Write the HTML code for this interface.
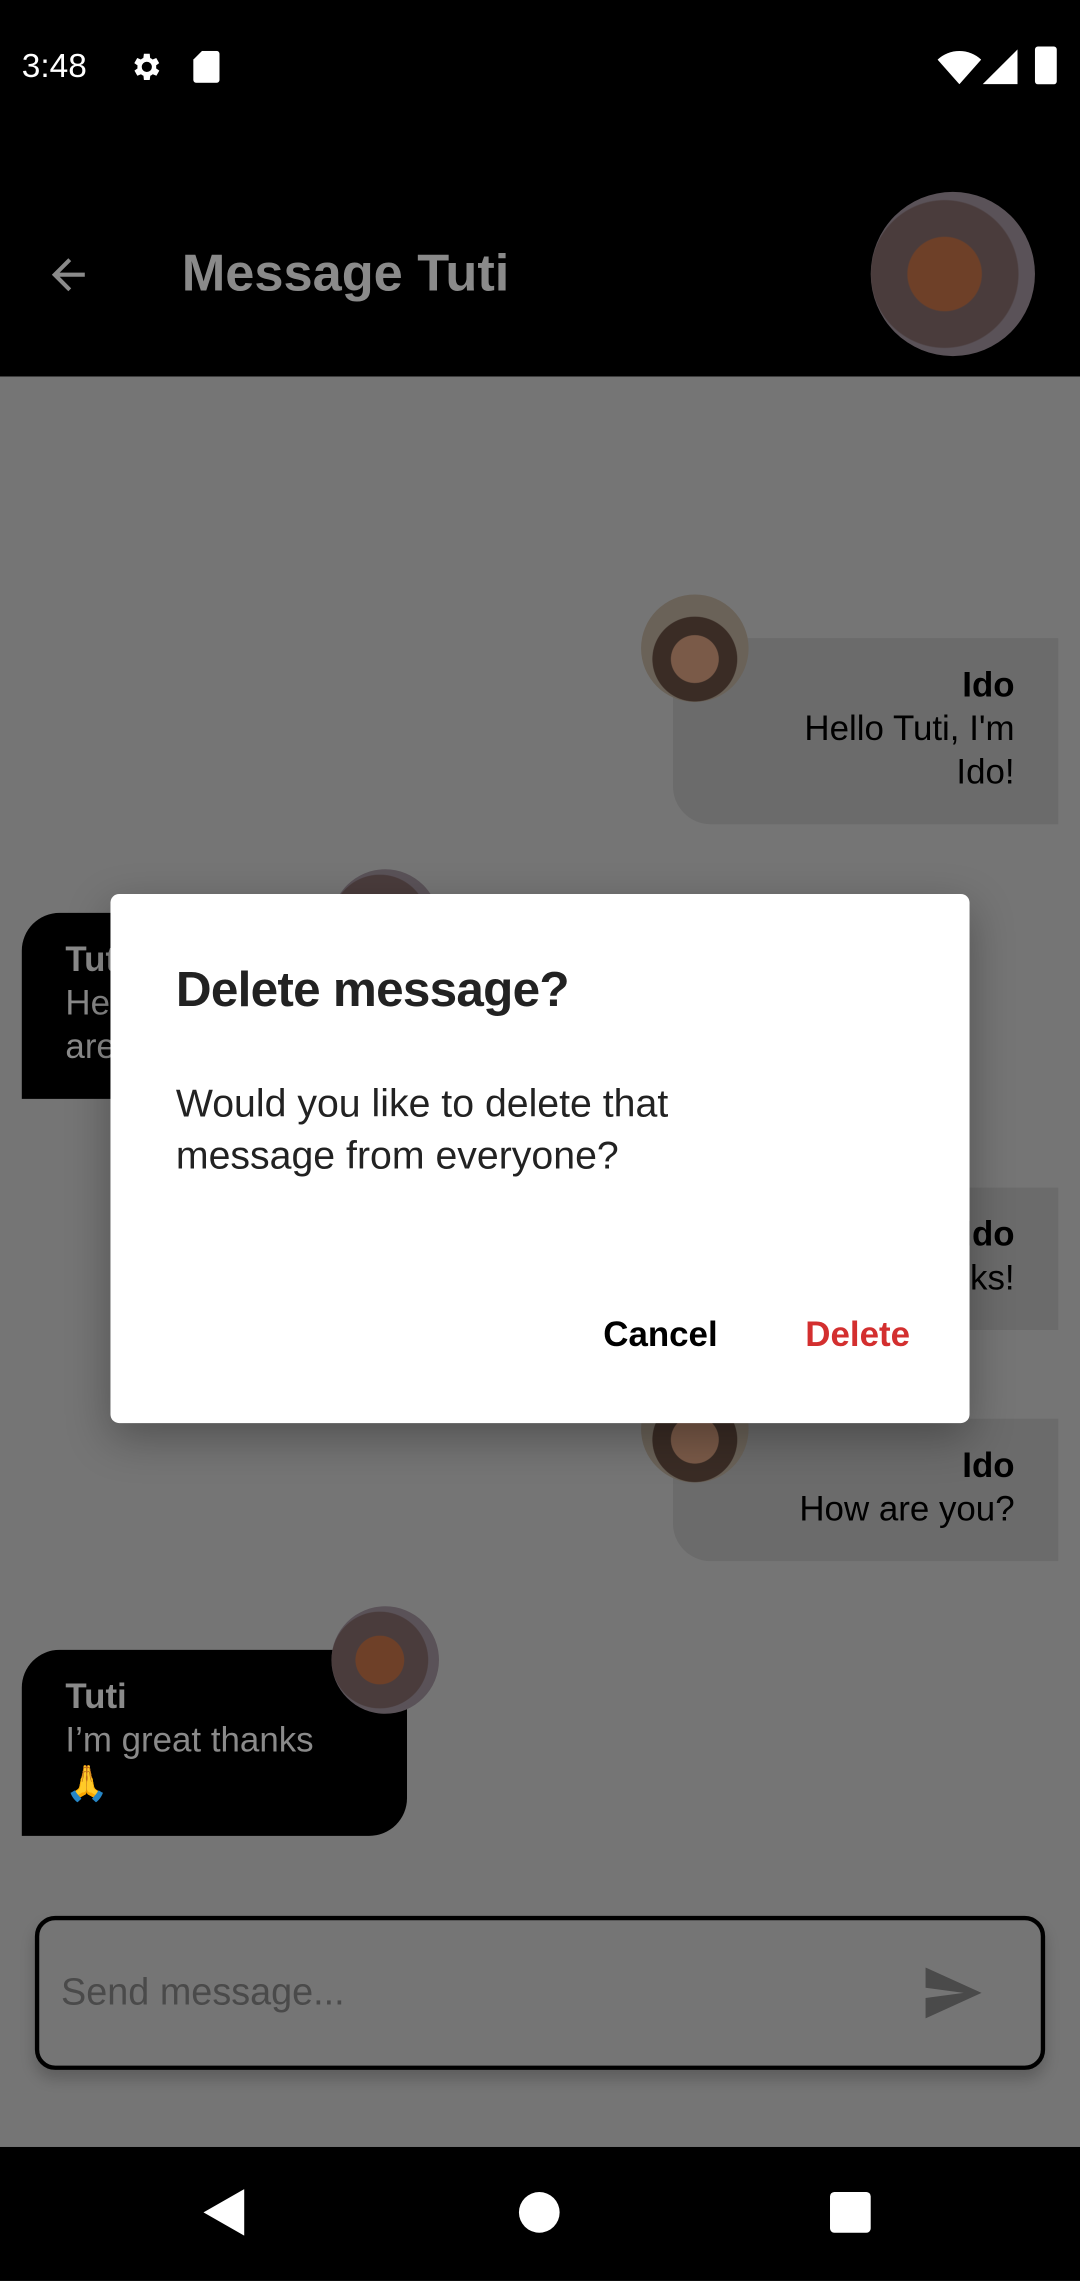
<!DOCTYPE html>
<html><head><style>
*{margin:0;padding:0;box-sizing:border-box}
body{width:1080px;height:2280px;overflow:hidden;background:#000;font-family:"Liberation Sans",sans-serif}
#w{width:743px;height:1569px;transform:scale(1.4536);transform-origin:0 0;position:relative;background:#757575}
.a{position:absolute}
.bub{position:absolute;width:265px;padding:18px 30px;font-size:24px;line-height:30px}
.ido{left:463px;background:#6b6b6b;color:#000;text-align:right;border-radius:26px 0 0 26px}
.tuti{left:15px;background:#000;color:#8a8a8a;border-radius:26px 26px 26px 0}
.av{position:absolute;width:74px;height:74px;border-radius:50%;}
.idoav{background:radial-gradient(circle at 50% 60%,#7a5a48 0 28%,#3a2c25 29% 50%,#6a6258 51%)}
.dogav{background:radial-gradient(circle at 45% 50%,#6e4028 0 30%,#4a3c3c 31% 60%,#5a5258 61%)}
</style></head><body><div id="w">
<div class="a" style="left:0;top:0;width:743px;height:259px;background:#000"></div>
<div class="a" style="left:15px;top:32px;color:#fff;font-size:23px">3:48</div>
<svg class="a" style="left:88px;top:34px" width="24" height="24" viewBox="0 0 24 24"><path fill="#fff" d="M19.4 13a7.5 7.5 0 000-2l2.1-1.6-2-3.5-2.5 1a7 7 0 00-1.7-1L15 3h-4l-.4 2.9a7 7 0 00-1.7 1l-2.5-1-2 3.5L6.6 11a7.5 7.5 0 000 2l-2.1 1.6 2 3.5 2.5-1a7 7 0 001.7 1L11 21h4l.4-2.9a7 7 0 001.7-1l2.5 1 2-3.5zM13 15.5a3.5 3.5 0 110-7 3.5 3.5 0 010 7z"/></svg>
<svg class="a" style="left:132px;top:35px" width="20" height="22" viewBox="0 0 20 22"><path fill="#fff" d="M7 0h10a2 2 0 012 2v18a2 2 0 01-2 2H3a2 2 0 01-2-2V6z"/></svg>
<svg class="a" style="left:645px;top:34px" width="30" height="24" viewBox="0 0 30 24"><path fill="#fff" d="M0 7a22 22 0 0130 0L15 24z"/></svg>
<svg class="a" style="left:676px;top:34px" width="24" height="24"><path fill="#fff" d="M24 0v24H0z"/></svg>
<div class="a" style="left:712px;top:32px;width:15px;height:26px;background:#fff;border-radius:2px"></div>
<svg class="a" style="left:30px;top:172px" width="34" height="34" viewBox="0 0 24 24"><path fill="#8a8a8a" d="M20 11H7.8l5.6-5.6L12 4l-8 8 8 8 1.4-1.4L7.8 13H20z"/></svg>
<div class="a" style="left:125px;top:167px;color:#8a8a8a;font-size:36px;font-weight:bold">Message Tuti</div>
<div class="av dogav" style="left:599px;top:132px;width:113px;height:113px"></div>

<div class="bub ido" style="top:439px;height:128px"><b>Ido</b><br>Hello Tuti, I'm<br>Ido!</div>
<div class="av idoav" style="left:441px;top:409px"></div>
<div class="bub tuti" style="top:628px;height:128px"><b>Tuti</b><br>Hello Ido, how<br>are you?</div>
<div class="av dogav" style="left:228px;top:598px"></div>
<div class="bub ido" style="top:817px;height:98px"><b>Ido</b><br>Thanks!</div>
<div class="bub ido" style="top:976px;height:98px"><b>Ido</b><br>How are you?</div>
<div class="av idoav" style="left:441px;top:946px"></div>
<div class="bub tuti" style="top:1135px;height:128px"><b>Tuti</b><br>I’m great thanks<br><span style="color:#2a4a80">🙏</span></div>
<div class="av dogav" style="left:228px;top:1105px"></div>

<div class="a" style="left:24px;top:1318px;width:695px;height:106px;border:3px solid #000;border-radius:14px;box-shadow:0 6px 10px rgba(0,0,0,.2)"></div>
<div class="a" style="left:42px;top:1355px;color:#4a4a4a;font-size:26px">Send message...</div>
<svg class="a" style="left:635px;top:1353px" width="42" height="36" viewBox="0 0 24 20"><path fill="#4a4a4a" d="M1 20l22-10L1 0v8l15 2-15 2z"/></svg>

<div class="a" style="left:76px;top:615px;width:591px;height:364px;background:#fff;border-radius:6px;box-shadow:0 10px 30px rgba(0,0,0,.3)"></div>
<div class="a" style="left:121px;top:662px;color:#222;font-size:34px;font-weight:bold;letter-spacing:-.5px">Delete message?</div>
<div class="a" style="left:121px;top:741px;color:#222;font-size:27px;line-height:36px">Would you like to delete that<br>message from everyone?</div>
<div class="a" style="left:415px;top:905px;color:#000;font-size:24px;font-weight:bold">Cancel</div>
<div class="a" style="left:554px;top:905px;color:#d32f2f;font-size:24px;font-weight:bold">Delete</div>

<div class="a" style="left:0;top:1477px;width:743px;height:92px;background:#000"></div>
<svg class="a" style="left:140px;top:1506px" width="30" height="32"><path fill="#fff" d="M28 0v32L0 16z"/></svg>
<div class="a" style="left:357px;top:1508px;width:28px;height:28px;border-radius:50%;background:#fff"></div>
<div class="a" style="left:571px;top:1508px;width:28px;height:28px;border-radius:3px;background:#fff"></div>
</div></body></html>
